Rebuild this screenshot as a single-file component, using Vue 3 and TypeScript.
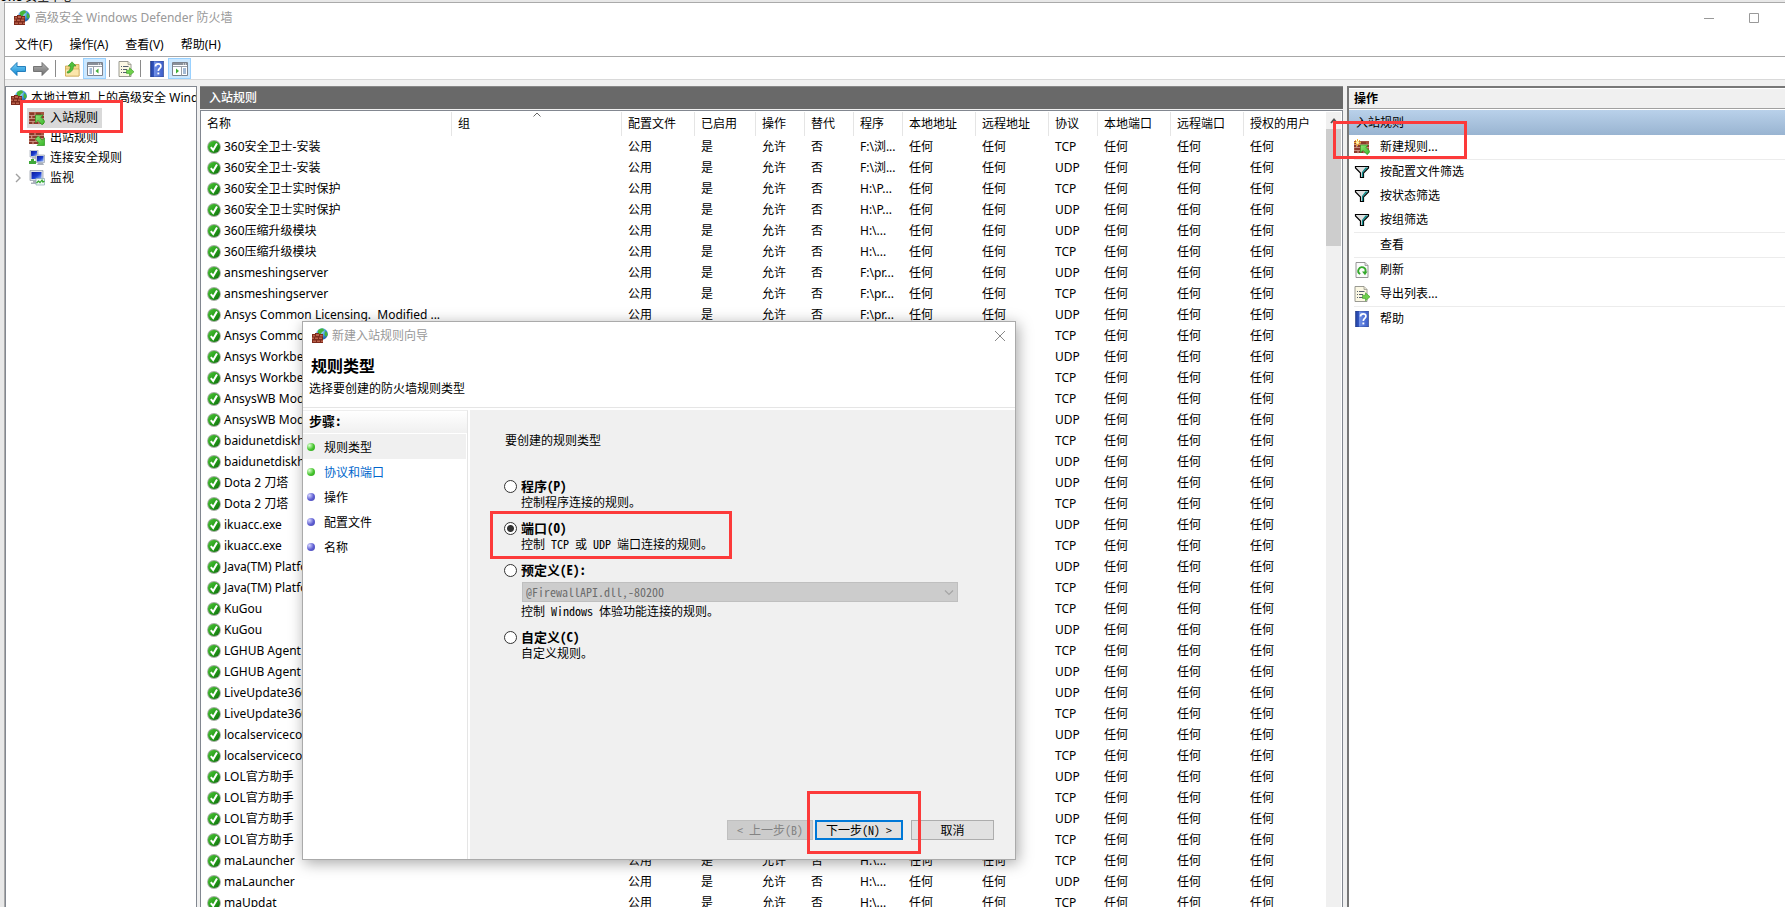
<script setup lang="ts">
import { ref } from 'vue'

interface Column {
  key: string
  title: string
  width: string
}

interface Rule {
  name: string
  program: string
  protocol: 'TCP' | 'UDP'
}

interface Action {
  label: string
  icon: string
  divided: boolean
}

interface RuleKind {
  id: string
  title: string
  key: string
  suffix: string
  description: string
}

const menus: string[] = ['文件(F)', '操作(A)', '查看(V)', '帮助(H)']

const columns: Column[] = [
  { key: 'name', title: '名称', width: '251px' },
  { key: 'group', title: '组', width: '170px' },
  { key: 'profile', title: '配置文件', width: '73px' },
  { key: 'enabled', title: '已启用', width: '61px' },
  { key: 'action', title: '操作', width: '49px' },
  { key: 'override', title: '替代', width: '49px' },
  { key: 'program', title: '程序', width: '49px' },
  { key: 'localAddress', title: '本地地址', width: '73px' },
  { key: 'remoteAddress', title: '远程地址', width: '73px' },
  { key: 'protocol', title: '协议', width: '49px' },
  { key: 'localPort', title: '本地端口', width: '73px' },
  { key: 'remotePort', title: '远程端口', width: '73px' },
  { key: 'users', title: '授权的用户', width: 'auto' },
]

const rule = (name: string, program: string, protocol: 'TCP' | 'UDP'): Rule => ({ name, program, protocol })

const rules: Rule[] = [
  rule('360安全卫士-安装', 'F:\\浏...', 'TCP'),
  rule('360安全卫士-安装', 'F:\\浏...', 'UDP'),
  rule('360安全卫士实时保护', 'H:\\P...', 'TCP'),
  rule('360安全卫士实时保护', 'H:\\P...', 'UDP'),
  rule('360压缩升级模块', 'H:\\...', 'UDP'),
  rule('360压缩升级模块', 'H:\\...', 'TCP'),
  rule('ansmeshingserver', 'F:\\pr...', 'UDP'),
  rule('ansmeshingserver', 'F:\\pr...', 'TCP'),
  rule('Ansys Common Licensing.  Modified ...', 'F:\\pr...', 'UDP'),
  rule('Ansys Common Licensing.  Modified ...', 'F:\\pr...', 'TCP'),
  rule('Ansys Workbench', 'F:\\pr...', 'UDP'),
  rule('Ansys Workbench', 'F:\\pr...', 'TCP'),
  rule('AnsysWB Module', 'F:\\pr...', 'TCP'),
  rule('AnsysWB Module', 'F:\\pr...', 'UDP'),
  rule('baidunetdiskhost', 'H:\\...', 'TCP'),
  rule('baidunetdiskhost', 'H:\\...', 'UDP'),
  rule('Dota 2 刀塔', 'H:\\...', 'UDP'),
  rule('Dota 2 刀塔', 'H:\\...', 'TCP'),
  rule('ikuacc.exe', 'H:\\...', 'UDP'),
  rule('ikuacc.exe', 'H:\\...', 'TCP'),
  rule('Java(TM) Platform', 'H:\\...', 'UDP'),
  rule('Java(TM) Platform', 'H:\\...', 'TCP'),
  rule('KuGou', 'H:\\...', 'TCP'),
  rule('KuGou', 'H:\\...', 'UDP'),
  rule('LGHUB Agent', 'H:\\...', 'TCP'),
  rule('LGHUB Agent', 'H:\\...', 'UDP'),
  rule('LiveUpdate360', 'H:\\...', 'UDP'),
  rule('LiveUpdate360', 'H:\\...', 'TCP'),
  rule('localservicecontrol', 'H:\\...', 'UDP'),
  rule('localservicecontrol', 'H:\\...', 'TCP'),
  rule('LOL官方助手', 'H:\\...', 'UDP'),
  rule('LOL官方助手', 'H:\\...', 'TCP'),
  rule('LOL官方助手', 'H:\\...', 'UDP'),
  rule('LOL官方助手', 'H:\\...', 'TCP'),
  rule('maLauncher', 'H:\\...', 'TCP'),
  rule('maLauncher', 'H:\\...', 'UDP'),
  rule('maUpdat', 'H:\\...', 'TCP'),
]

const actions: Action[] = [
  { label: '新建规则...', icon: 'i-new', divided: true },
  { label: '按配置文件筛选', icon: 'i-filter', divided: false },
  { label: '按状态筛选', icon: 'i-filter', divided: false },
  { label: '按组筛选', icon: 'i-filter', divided: true },
  { label: '查看', icon: '', divided: true },
  { label: '刷新', icon: 'i-refresh', divided: false },
  { label: '导出列表...', icon: 'i-export', divided: true },
  { label: '帮助', icon: 'i-help', divided: false },
]

const tree = [
  { label: '入站规则', icon: 'i-in', selected: true, expandable: false },
  { label: '出站规则', icon: 'i-out', selected: false, expandable: false },
  { label: '连接安全规则', icon: 'i-conn', selected: false, expandable: false },
  { label: '监视', icon: 'i-monitor', selected: false, expandable: true },
]

const steps = [
  { label: '规则类型', state: 'current' },
  { label: '协议和端口', state: 'next' },
  { label: '操作', state: 'later' },
  { label: '配置文件', state: 'later' },
  { label: '名称', state: 'later' },
]

const kinds: RuleKind[] = [
  { id: 'program', title: '程序', key: '(P)', suffix: '', description: '控制程序连接的规则。' },
  { id: 'port', title: '端口', key: '(O)', suffix: '', description: '控制 TCP 或 UDP 端口连接的规则。' },
  { id: 'predefined', title: '预定义', key: '(E)', suffix: ':', description: '控制 Windows 体验功能连接的规则。' },
  { id: 'custom', title: '自定义', key: '(C)', suffix: '', description: '自定义规则。' },
]

const chosen = ref('port')
</script>

<template>
  <div class="desktop">
    <svg class="defs" aria-hidden="true">
      <defs>
        <radialGradient id="g-globe" cx="0.4" cy="0.3" r="0.8">
          <stop offset="0" stop-color="#bfe8fb" />
          <stop offset="0.5" stop-color="#3d97d8" />
          <stop offset="1" stop-color="#134a94" />
        </radialGradient>
        <linearGradient id="g-check" x1="0" y1="0" x2="1" y2="1">
          <stop offset="0" stop-color="#4fc63a" />
          <stop offset="0.5" stop-color="#27a01b" />
          <stop offset="1" stop-color="#0c6a0c" />
        </linearGradient>
        <linearGradient id="g-arrow" x1="0" y1="0" x2="1" y2="1">
          <stop offset="0" stop-color="#8fe27a" />
          <stop offset="1" stop-color="#35b526" />
        </linearGradient>
        <linearGradient id="g-back" x1="0" y1="0" x2="0" y2="1">
          <stop offset="0" stop-color="#7fd3f7" />
          <stop offset="1" stop-color="#0d86d3" />
        </linearGradient>
        <linearGradient id="g-fwd" x1="0" y1="0" x2="0" y2="1">
          <stop offset="0" stop-color="#b5b5b5" />
          <stop offset="1" stop-color="#6e6e6e" />
        </linearGradient>
        <linearGradient id="g-help" x1="0" y1="0" x2="1" y2="0">
          <stop offset="0" stop-color="#1f3f9e" />
          <stop offset="0.25" stop-color="#3456c0" />
          <stop offset="0.3" stop-color="#6f8fe6" />
          <stop offset="1" stop-color="#3a5cc8" />
        </linearGradient>
        <linearGradient id="g-screen" x1="0" y1="0" x2="1" y2="1">
          <stop offset="0" stop-color="#0a1a9a" />
          <stop offset="0.55" stop-color="#1c3fd0" />
          <stop offset="1" stop-color="#9fc3ff" />
        </linearGradient>
      </defs>

      <symbol id="i-bricks" viewBox="0 0 16 16">
        <path d="M0 2h15v12H0z" fill="#a5523f" />
        <path d="M1 3h4v2H1zM7 3h5v2H7zM0 6h2v2H0zM4 6h5v2H4zM11 6h4v2h-4zM1 9h5v2H1zM8 9h4v2H8zM0 12h3v2H0zM5 12h4v2H5zM11 12h4v2h-4z" fill="#8a3a2b" />
        <path d="M0 5.500h15M0 8.500h15M0 11.500h15M6 2v3M2.500 5.500v3M10 5.500v3M7 8.500v3M13 8.500v3M4 11.500v3M10 11.500v3" stroke="#d3a596" stroke-width="0.700" fill="none" />
      </symbol>

      <symbol id="i-firewall" viewBox="0 0 16 16">
        <circle cx="10" cy="6" r="5.800" fill="url(#g-globe)" />
        <path d="M6 2.500c1.500-1.800 4-2.300 5.500-1.800l.5 1.800-2 1.500-1.500 2.500-2.500-1zM13 3l2 1.500.7 2.500-1.700 2-1.500-2.500z" fill="#45b53a" />
        <path d="M0 6h3V5h4v1h4v9H0z" fill="#7d2a1c" />
        <path d="M1 7h2v1.500H1zM4 6h3v2H4zM8 7h2.500v1.500H8zM0 9.500h2V11H0zM3 9.500h3V11H3zM7 9.500h3V11H7zM1 12.500h3V14H1zM5 12.500h3V14H5zM9 12.500h2V14H9z" fill="#b9614a" />
      </symbol>

      <symbol id="i-in" viewBox="0 0 16 16">
        <use href="#i-bricks" />
        <path d="M6.500 5h7.500L12 7.300l4 4.200-2.800 3.500-4.200-4.500-2.500 2.500z" fill="url(#g-arrow)" stroke="#2c9420" stroke-width="0.700" />
      </symbol>

      <symbol id="i-out" viewBox="0 0 16 16">
        <use href="#i-bricks" />
        <path d="M15.500 15.500H8l2.300-2.300-4-4.200 3-3 4 4.200 2.200-2.400z" fill="url(#g-arrow)" stroke="#2c9420" stroke-width="0.700" />
      </symbol>

      <symbol id="i-new" viewBox="0 0 16 16">
        <use href="#i-bricks" />
        <path d="M6.500 6h7.500L12 8.300l4 4.200-2.800 3.200-4.200-4.400-2.500 2.500z" fill="url(#g-arrow)" stroke="#2c9420" stroke-width="0.700" />
        <path d="M3.500 0v7M0 3.500h7M1 1l5 5M6 1L1 6" stroke="#f5b32d" stroke-width="1" />
        <circle cx="3.500" cy="3.500" r="1.500" fill="#fff3b0" />
      </symbol>

      <symbol id="i-conn" viewBox="0 0 16 16">
        <path d="M1 0h8v7H1z" fill="#d7dde6" stroke="#8d97a5" stroke-width="0.600" />
        <path d="M2 1h6v5H2z" fill="url(#g-screen)" />
        <path d="M3 7.500h4v1H3z" fill="#8d97a5" />
        <path d="M7 5h8.500v7.500H7z" fill="#d7dde6" stroke="#8d97a5" stroke-width="0.600" />
        <path d="M8 6h6.500v5.500H8z" fill="url(#g-screen)" />
        <path d="M9 13h5l1 2H8z" fill="#a7afbb" />
        <path d="M2 9h3v2h2v3H0v-3h2z" fill="#3fa83a" />
      </symbol>

      <symbol id="i-monitor" viewBox="0 0 16 16">
        <path d="M1 .5h13v10H1z" fill="#dde1e8" stroke="#8d97a5" stroke-width="0.700" />
        <path d="M2.500 2h10v7h-10z" fill="url(#g-screen)" />
        <path d="M4 11h5v1.500h2V14H2v-1.500h2z" fill="#a9b0bb" />
        <path d="M7 8.500h8.500v6.500H7z" fill="#eef6f4" stroke="#8aa6b5" stroke-width="0.700" />
        <path d="M7.500 13l2-2 1.500 1.500 2-2.500 1 2 1.500-1" stroke="#32a72b" stroke-width="1.200" fill="none" />
      </symbol>

      <symbol id="i-filter" viewBox="0 0 16 16">
        <path d="M1.500 2.500h13v1.500L9.500 9v4.500h-3V9l-5-5z" fill="#e0e0e0" stroke="#000" stroke-width="1.200" />
        <path d="M14 3.500L9.200 8.300V13H8V8l3.500-4.500z" fill="#0f8c8c" />
      </symbol>

      <symbol id="i-refresh" viewBox="0 0 16 16">
        <path d="M2 .5h9L14 3.500v12H2z" fill="#fbfbfb" stroke="#8b8b8b" stroke-width="0.900" />
        <path d="M11 .5V3.500h3" fill="#ddd" stroke="#8b8b8b" stroke-width="0.700" />
        <path d="M6.200 12A3.600 3.600 0 1 1 11.300 10" stroke="#35a92c" stroke-width="1.900" fill="none" />
        <path d="M8 9.500h5.500L11 13.200z" fill="#35a92c" />
      </symbol>

      <symbol id="i-export" viewBox="0 0 16 16">
        <path d="M1 .5h9L13 3.500v12H1z" fill="#fbf8e4" stroke="#8f8f87" stroke-width="0.900" />
        <path d="M10 .5V3.500h3" fill="#e5e2cf" stroke="#8f8f87" stroke-width="0.700" />
        <path d="M3 5.500h1M5 5.500h5.500M3 8.500h1M5 8.500h4M3 11.500h1M5 11.500h4" stroke="#55606e" stroke-width="1" />
        <path d="M8.500 9.200h3V6.800L16 10.800l-4.500 4v-2.400h-3z" fill="#6fd04c" stroke="#3a9a24" stroke-width="0.600" />
      </symbol>

      <symbol id="i-help" viewBox="0 0 16 16">
        <path d="M1.500 0h13v16h-13z" fill="url(#g-help)" stroke="#24397f" stroke-width="0.600" />
        <path d="M6.500 5.400c0-3.400 5.400-3.200 5.400-.2 0 2.200-2.600 2.300-2.600 4.800" stroke="#fff" stroke-width="1.700" fill="none" />
        <path d="M8.400 11.500h1.900v1.900H8.400z" fill="#fff" />
      </symbol>

      <symbol id="i-back" viewBox="0 0 16 16">
        <path d="M.5 8L7 1.500v4h8.500v5H7v4z" fill="url(#g-back)" stroke="#1775b5" stroke-width="0.900" stroke-linejoin="round" />
      </symbol>

      <symbol id="i-fwd" viewBox="0 0 16 16">
        <path d="M15.500 8L9 1.500v4H.5v5H9v4z" fill="url(#g-fwd)" stroke="#6b6b6b" stroke-width="0.900" stroke-linejoin="round" />
      </symbol>

      <symbol id="i-up" viewBox="0 0 16 16">
        <path d="M1.500 5h5l1.500-1.500h7V15h-13.500z" fill="#f4d78a" stroke="#c9a24a" stroke-width="0.800" />
        <path d="M1.500 8h13.500v7h-13.500z" fill="#fbe6ab" stroke="#c9a24a" stroke-width="0.600" />
        <path d="M3 11c2.200-.8 3.500-2.600 3.400-6H4.200L8 .800 12 5H9.400c.2 3.600-2 6.400-5.700 7.200z" fill="#4fc03d" stroke="#2a8d20" stroke-width="0.600" />
      </symbol>

      <symbol id="i-pane-left" viewBox="0 0 16 16">
        <path d="M.5 1.500h15v13H.5z" fill="#fff" stroke="#7c828c" />
        <path d="M1 2h14v2H1z" fill="#8a9099" />
        <path d="M11 3h1M13 3h1" stroke="#fff" />
        <path d="M1 5.500h14M6.500 5.500v9" stroke="#9ba1aa" />
        <path d="M2.500 8h2.500M2.500 10h2.500M2.500 12h2.500" stroke="#4b78b0" />
        <path d="M11.500 7.500v5L8.500 10z" fill="#3fae34" />
      </symbol>

      <symbol id="i-pane-right" viewBox="0 0 16 16">
        <path d="M.5 1.500h15v13H.5z" fill="#fff" stroke="#7c828c" />
        <path d="M1 2h14v2H1z" fill="#8a9099" />
        <path d="M11 3h1M13 3h1" stroke="#fff" />
        <path d="M1 5.500h14M9.500 5.500v9" stroke="#9ba1aa" />
        <path d="M11 8h3M11 10h3M11 12h3" stroke="#4b78b0" />
        <path d="M4 7.500v5L7 10z" fill="#3fae34" />
      </symbol>

      <symbol id="i-check" viewBox="0 0 14 14">
        <circle cx="7" cy="7" r="6.900" fill="#a3ada0" />
        <circle cx="7" cy="7" r="6" fill="url(#g-check)" />
        <path d="M3.800 7.200L6.200 10 10 3.600" stroke="#fff" stroke-width="2" fill="none" />
      </symbol>
    </svg>

    <div class="behind"><span>ows 安全中心</span></div>

    <main class="window">
      <header class="title-bar">
        <svg class="icon"><use href="#i-firewall" /></svg>
        <h1>高级安全 Windows Defender 防火墙</h1>
        <button class="caption" type="button" aria-label="最小化">
          <svg viewBox="0 0 10 10"><path d="M0 5.500h10" stroke="#999" fill="none" /></svg>
        </button>
        <button class="caption" type="button" aria-label="最大化">
          <svg viewBox="0 0 10 10"><path d="M.5 .5h9v9h-9z" stroke="#999" fill="none" /></svg>
        </button>
      </header>

      <nav class="menu-bar">
        <button v-for="menu in menus" :key="menu" type="button">{{ menu }}</button>
      </nav>

      <div class="tool-bar">
        <button type="button" aria-label="后退"><svg class="icon"><use href="#i-back" /></svg></button>
        <button type="button" aria-label="前进"><svg class="icon"><use href="#i-fwd" /></svg></button>
        <i class="rule" />
        <button type="button" aria-label="上移"><svg class="icon"><use href="#i-up" /></svg></button>
        <button type="button" class="on" aria-label="控制台树"><svg class="icon"><use href="#i-pane-left" /></svg></button>
        <i class="rule" />
        <button type="button" aria-label="导出列表"><svg class="icon"><use href="#i-export" /></svg></button>
        <i class="rule" />
        <button type="button" aria-label="帮助"><svg class="icon"><use href="#i-help" /></svg></button>
        <button type="button" class="on" aria-label="操作窗格"><svg class="icon"><use href="#i-pane-right" /></svg></button>
      </div>

      <div class="panes">
        <aside class="tree">
          <div class="root">
            <svg class="icon"><use href="#i-firewall" /></svg>
            <span>本地计算机 上的高级安全 Windows Defender 防火墙</span>
          </div>
          <ul>
            <li v-for="node in tree" :key="node.label">
              <span class="twisty">
                <svg v-if="node.expandable" viewBox="0 0 6 10"><path d="M1 1l4 4-4 4" stroke="#a0a0a0" stroke-width="1.400" fill="none" /></svg>
              </span>
              <a href="#" :class="{ selected: node.selected }">
                <svg class="icon"><use :href="'#' + node.icon" /></svg>
                <span>{{ node.label }}</span>
              </a>
            </li>
          </ul>
        </aside>

        <section class="list-pane">
          <h2>入站规则</h2>
          <div class="list">
            <div class="list-view">
              <table>
                <colgroup>
                  <col v-for="column in columns" :key="column.key" :style="{ width: column.width }" />
                </colgroup>
                <thead>
                  <tr>
                    <th v-for="column in columns" :key="column.key" scope="col">
                      {{ column.title }}
                      <svg v-if="column.key === 'group'" class="sort" viewBox="0 0 8 5"><path d="M.5 4.500L4 1l3.500 3.500" stroke="#666" fill="none" /></svg>
                    </th>
                  </tr>
                </thead>
                <tbody>
                  <tr v-for="(item, index) in rules" :key="index">
                    <td>
                      <div class="name"><svg><use href="#i-check" /></svg><span>{{ item.name }}</span></div>
                    </td>
                    <td></td>
                    <td>公用</td>
                    <td>是</td>
                    <td>允许</td>
                    <td>否</td>
                    <td>{{ item.program }}</td>
                    <td>任何</td>
                    <td>任何</td>
                    <td>{{ item.protocol }}</td>
                    <td>任何</td>
                    <td>任何</td>
                    <td>任何</td>
                  </tr>
                </tbody>
              </table>
            </div>
            <div class="scroll">
              <svg viewBox="0 0 8 6"><path d="M1 5l3-3.500L7 5" stroke="#555" stroke-width="1.800" fill="none" /></svg>
              <div class="thumb"></div>
            </div>
          </div>
        </section>

        <aside class="actions">
          <h2>操作</h2>
          <h3>入站规则</h3>
          <ul>
            <li v-for="action in actions" :key="action.label" :class="{ divided: action.divided }">
              <button type="button">
                <svg class="icon"><use v-if="action.icon" :href="'#' + action.icon" /></svg>
                <span>{{ action.label }}</span>
              </button>
            </li>
          </ul>
        </aside>
      </div>
    </main>

    <section class="wizard" role="dialog" aria-labelledby="wizard-title">
      <header class="wizard-bar">
        <svg class="icon"><use href="#i-firewall" /></svg>
        <span id="wizard-title">新建入站规则向导</span>
        <button type="button" aria-label="关闭">
          <svg viewBox="0 0 12 12"><path d="M1 1l10 10M11 1L1 11" stroke="#888" fill="none" /></svg>
        </button>
      </header>
      <div class="wizard-head">
        <h2>规则类型</h2>
        <p>选择要创建的防火墙规则类型</p>
      </div>
      <div class="wizard-body">
        <nav class="steps">
          <h3>步骤:</h3>
          <ol>
            <li v-for="step in steps" :key="step.label" :class="step.state">
              <i class="dot" />
              <a v-if="step.state === 'next'" href="#">{{ step.label }}</a>
              <span v-else>{{ step.label }}</span>
            </li>
          </ol>
        </nav>
        <form class="page" @submit.prevent>
          <p class="lead">要创建的规则类型</p>
          <div v-for="kind in kinds" :key="kind.id" class="kind">
            <input :id="'kind-' + kind.id" v-model="chosen" type="radio" name="kind" :value="kind.id" />
            <div class="kind-text">
              <label :for="'kind-' + kind.id">{{ kind.title }}{{ kind.key }}{{ kind.suffix }}</label>
              <div v-if="kind.id === 'predefined'" class="combo">
                <select disabled aria-label="预定义">
                  <option>@FirewallAPI.dll,-80200</option>
                </select>
                <svg viewBox="0 0 10 6"><path d="M1 .5l4 4 4-4" stroke="#a5a5a5" stroke-width="1.200" fill="none" /></svg>
              </div>
              <p>{{ kind.description }}</p>
            </div>
          </div>
          <footer>
            <button type="button" disabled>&lt; 上一步(B)</button>
            <button type="submit" class="default">下一步(N) &gt;</button>
            <button type="button" class="cancel">取消</button>
          </footer>
        </form>
      </div>
    </section>

    <i class="mark mark-tree" />
    <i class="mark mark-action" />
    <i class="mark mark-port" />
    <i class="mark mark-next" />
  </div>
</template>

<style>
body {
  margin: 0;
  overflow: hidden;
}
</style>

<style scoped>
.desktop {
  position: relative;
  display: flex;
  flex-direction: column;
  height: 100vh;
  overflow: hidden;
  background: #e8e8e8;
  color: #000;
  font: 12px/20px "Noto Sans", "Noto Sans CJK SC", sans-serif;
}

.desktop *,
.desktop *::before {
  box-sizing: border-box;
}

h1,
h2,
h3,
p,
ul,
ol {
  margin: 0;
  padding: 0;
  font: inherit;
  list-style: none;
}

button {
  padding: 0;
  border: 0;
  background: none;
  color: inherit;
  font: inherit;
}

a {
  color: inherit;
  text-decoration: none;
}

.defs {
  position: absolute;
  width: 0;
  height: 0;
}

.icon {
  flex: none;
  width: 16px;
  height: 16px;
}

.behind {
  display: flex;
  align-items: flex-end;
  height: 2px;
  overflow: hidden;
  line-height: 10px;
}

.window {
  display: flex;
  flex: 1;
  flex-direction: column;
  min-height: 0;
  margin-left: 4px;
  border-top: 1px solid #aaa;
  border-left: 1px solid #aaa;
  background: #f0f0f0;
}

.title-bar {
  display: flex;
  align-items: center;
  gap: 5px;
  height: 30px;
  padding: 0 11px 0 9px;
  background: #fff;
  color: #999;
}

.title-bar h1 {
  flex: 1;
}

.caption {
  display: flex;
  align-items: center;
  justify-content: center;
  width: 40px;
  height: 30px;
}

.caption svg {
  width: 10px;
  height: 10px;
}

.menu-bar {
  display: flex;
  gap: 17px;
  height: 24px;
  padding-left: 10px;
  border-bottom: 1px solid #a8a8a8;
  background: #fff;
}

.tool-bar {
  display: flex;
  align-items: flex-end;
  height: 23px;
  padding-left: 1px;
  border-bottom: 1px solid #d9d9d9;
  background: #fff;
}

.tool-bar button {
  display: flex;
  align-items: center;
  justify-content: center;
  width: 23px;
  height: 21px;
}

.tool-bar .on {
  border: 1px solid #99d1ff;
  background: #cce8ff;
}

.tool-bar .rule {
  width: 1px;
  height: 17px;
  margin: 0 4px 2px 3px;
  background: #8a8a8a;
}

.panes {
  display: flex;
  flex: 1;
  min-height: 0;
  padding-top: 6px;
}

.tree {
  flex: none;
  width: 192px;
  margin-right: 3px;
  overflow: hidden;
  border: 1px solid #828790;
  border-bottom: 0;
  background: #fff;
  white-space: nowrap;
}

.root {
  display: flex;
  align-items: center;
  gap: 4px;
  height: 20px;
  margin-top: 1px;
  padding-left: 5px;
}

.tree li {
  display: flex;
  align-items: center;
  height: 20px;
  padding-left: 9px;
}

.twisty {
  display: flex;
  width: 12px;
}

.twisty svg {
  width: 6px;
  height: 10px;
}

.tree a {
  display: flex;
  align-items: center;
  gap: 5px;
  height: 20px;
  padding: 0 4px 0 2px;
}

.tree .selected {
  background: #d9d9d9;
}

.list-pane {
  display: flex;
  flex: 1;
  flex-direction: column;
  min-width: 0;
  margin-right: 4px;
}

.list-pane h2 {
  height: 23px;
  margin-bottom: 1px;
  padding-left: 9px;
  border-top: 1px solid #888;
  background: #696969;
  color: #fff;
  font-weight: 500;
  line-height: 22px;
}

.list {
  display: flex;
  flex: 1;
  min-height: 0;
  border: 1px solid #828790;
  border-bottom: 0;
  background: #fff;
}

.list-view {
  flex: 1;
  min-width: 0;
  overflow: hidden;
}

table {
  width: 100%;
  border-collapse: separate;
  border-spacing: 0;
  table-layout: fixed;
}

th,
td {
  overflow: hidden;
  padding: 0 0 0 6px;
  font-weight: 400;
  text-align: left;
  white-space: pre;
}

th {
  position: relative;
  height: 25px;
  white-space: nowrap;
}

th:not(:last-child)::before {
  position: absolute;
  top: 1px;
  right: 0;
  bottom: 0;
  width: 1px;
  background: #e5e5e5;
  content: "";
}

td {
  height: 21px;
}

.sort {
  position: absolute;
  top: 1px;
  left: 50%;
  width: 8px;
  height: 5px;
  margin-left: -4px;
}

.name {
  display: flex;
  align-items: center;
  gap: 3px;
}

.name svg {
  flex: none;
  width: 14px;
  height: 14px;
}

.scroll {
  display: flex;
  flex: none;
  flex-direction: column;
  align-items: center;
  width: 16px;
  margin-top: 1px;
  border-right: 1px solid #fff;
  background: #f0f0f0;
}

.scroll svg {
  width: 8px;
  height: 6px;
  margin: 6px 0 5px;
}

.thumb {
  width: 100%;
  height: 117px;
  background: #cdcdcd;
}

.actions {
  flex: none;
  width: 438px;
  border-top: 2px solid #777;
  border-left: 2px solid #777;
  background: #fff;
}

.actions h2 {
  height: 21px;
  padding-left: 5px;
  border-top: 1px solid #fff;
  border-bottom: 1px solid #a0a0a0;
  background: #f0f0f0;
  font-weight: 700;
}

.actions h3 {
  height: 25px;
  margin-top: 1px;
  padding-left: 7px;
  background: linear-gradient(#b9d1ea, #99b4d1);
  line-height: 25px;
}

.actions ul {
  padding-left: 5px;
}

.actions .divided {
  border-bottom: 1px solid #ececec;
}

.actions li button {
  display: flex;
  align-items: center;
  gap: 10px;
  width: 100%;
  height: 24px;
}

.wizard {
  position: absolute;
  top: 321px;
  left: 302px;
  display: flex;
  flex-direction: column;
  width: 714px;
  height: 539px;
  border: 1px solid #aaa;
  background: #fff;
  box-shadow: 2px 3px 14px rgba(0, 0, 0, 0.35);
}

.wizard-bar {
  display: flex;
  align-items: center;
  gap: 4px;
  height: 28px;
  padding: 0 9px;
  color: #999;
}

.wizard-bar span {
  flex: 1;
}

.wizard-bar svg {
  display: block;
}

.wizard-bar button svg {
  width: 12px;
  height: 12px;
}

.wizard-head {
  height: 58px;
  padding: 4px 6px 0;
  border-bottom: 1px solid #e5e5e5;
}

.wizard-head h2 {
  padding-left: 2px;
  font-size: 16px;
  font-weight: 700;
  line-height: 22px;
}

.wizard-head p {
  line-height: 24px;
}

.wizard-head,
.wizard-body {
  font-family: "Noto Sans CJK SC", sans-serif;
  font-feature-settings: "hwid";
}

.wizard-body {
  display: flex;
  flex: 1;
  min-height: 0;
  padding-top: 2px;
}

.steps {
  flex: none;
  width: 165px;
  margin-right: 2px;
  border-top: 1px solid #eee;
  border-right: 1px solid #e5e5e5;
}

.steps h3 {
  height: 22px;
  margin-bottom: 1px;
  padding-left: 6px;
  background: linear-gradient(#fff, #f0f0f0);
  font-size: 13px;
  font-weight: 700;
}

.steps li {
  display: flex;
  align-items: center;
  gap: 9px;
  height: 25px;
  margin-right: 1px;
  padding-left: 4px;
}

.steps .current {
  background: #f0f0f0;
}

.steps .next {
  color: #0066cc;
}

.dot {
  width: 8px;
  height: 8px;
  border-radius: 50%;
  background: radial-gradient(circle at 30% 30%, #d5d5ff, #5c5cd0 55%, #4a4ab0);
}

.current .dot,
.next .dot {
  background: radial-gradient(circle at 30% 30%, #dcffd0, #44c42c 55%, #2c9a1c);
}

.page {
  display: flex;
  flex: 1;
  flex-direction: column;
  padding: 20px 21px 19px 34px;
  background: #f0f0f0;
}

.lead {
  margin: 0 0 28px 1px;
}

.kind {
  display: flex;
  gap: 4px;
  margin-bottom: 10px;
  line-height: 16px;
}

.kind input {
  flex: none;
  width: 13px;
  height: 13px;
  margin: 2px 0;
  border: 1px solid #333;
  border-radius: 50%;
  appearance: none;
  background: #fff;
}

.kind input:checked {
  background: radial-gradient(circle, #333 3px, #fff 4px);
}

.kind-text {
  flex: 1;
}

.kind label {
  display: block;
  font-size: 13px;
  font-weight: 700;
}

.kind p {
  line-height: 16px;
}

.combo {
  position: relative;
  width: 436px;
  margin: 4px 0 1px 1px;
}

.combo select {
  display: block;
  width: 100%;
  height: 20px;
  padding: 0 3px;
  border: 1px solid #bfbfbf;
  border-radius: 0;
  appearance: none;
  background: #ccc;
  color: #6d6d6d;
  font: inherit;
  font-feature-settings: inherit;
  opacity: 1;
}

.combo svg {
  position: absolute;
  top: 8px;
  right: 4px;
  width: 10px;
  height: 6px;
}

footer {
  display: flex;
  justify-content: flex-end;
  margin-top: auto;
}

footer button {
  width: 83px;
  height: 20px;
  border: 1px solid #adadad;
  background: #e1e1e1;
  line-height: 18px;
}

footer button:disabled {
  width: 86px;
  border-color: #bfbfbf;
  background: #ccc;
  color: #838383;
}

footer .default {
  width: 88px;
  margin: 0 8px 0 2px;
  border: 2px solid #0078d7;
  line-height: 16px;
}

.mark {
  position: absolute;
  border: 3px solid #fc3a3a;
  pointer-events: none;
}

.mark-tree {
  top: 100px;
  left: 20px;
  width: 103px;
  height: 33px;
}

.mark-action {
  top: 121px;
  left: 1333px;
  width: 134px;
  height: 38px;
}

.mark-port {
  top: 511px;
  left: 490px;
  width: 242px;
  height: 48px;
}

.mark-next {
  top: 791px;
  left: 807px;
  width: 114px;
  height: 63px;
}
</style>
